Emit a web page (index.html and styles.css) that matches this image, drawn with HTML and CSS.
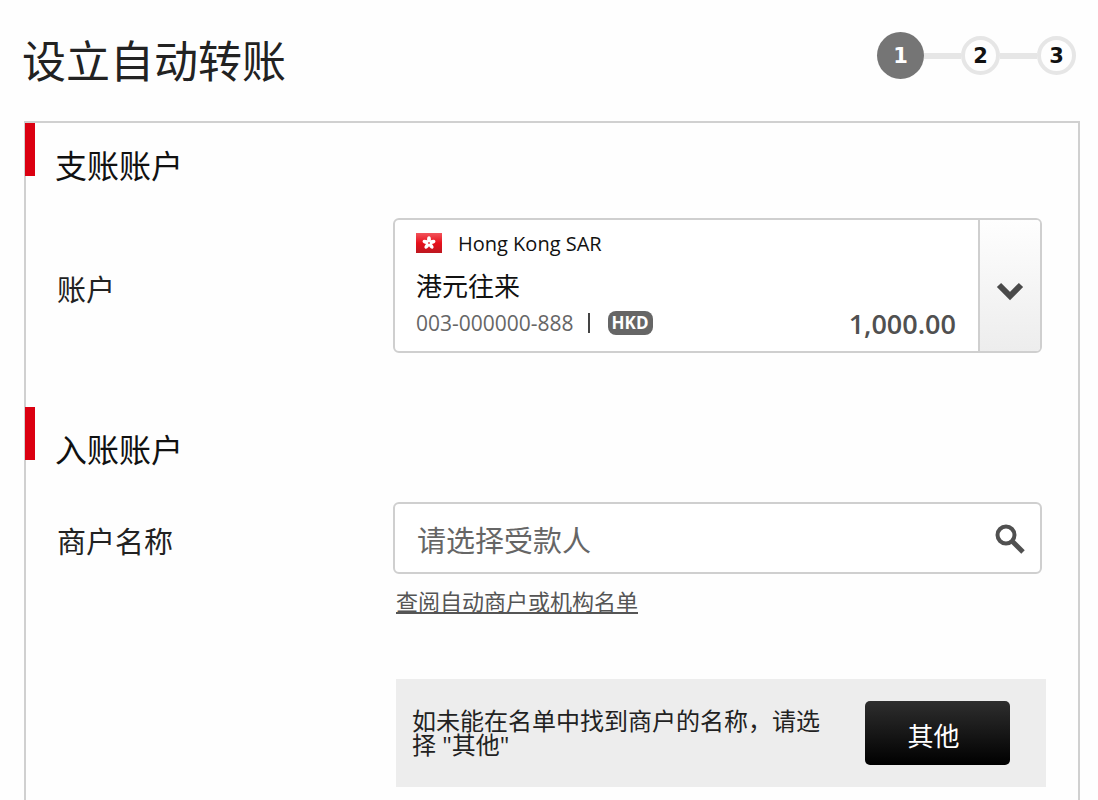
FILE: index.html
```html
<!DOCTYPE html>
<html lang="zh-CN">
  <head>
    <meta charset="UTF-8" />
    <meta name="viewport" content="width=device-width, initial-scale=1.0" />
    <title>设立自动转账</title>
    <link rel="stylesheet" href="styles.css">
  </head>
  <body>
    <header class="header">
      <h1 class="title">设立自动转账</h1>
      <ol class="steps">
        <li class="step active"><span class="circle">1</span></li>
        <li class="step"><span class="circle">2</span></li>
        <li class="step"><span class="circle">3</span></li>
      </ol>
    </header>
    <main class="panel">
      <section class="section">
        <h2 class="section-title"><span>支账账户</span></h2>
        <div class="row account-row">
          <label class="label" for="account">账户</label>
          <button class="account" id="account" type="button" aria-haspopup="listbox">
            <span class="account-info">
              <span class="country">
                <svg class="flag" width="26" height="20" viewBox="0 0 26 20">
                  <defs>
                    <linearGradient id="red" x1="0" y1="0" x2="0" y2="1">
                      <stop offset="0" stop-color="#f2545b" />
                      <stop offset="0.5" stop-color="#e8101c" />
                      <stop offset="1" stop-color="#bd1820" />
                    </linearGradient>
                  </defs>
                  <rect width="26" height="20" fill="url(#red)" />
                  <g fill="#fff">
                    <ellipse cx="13" cy="6.5" rx="1.9" ry="3.2" />
                    <ellipse cx="13" cy="6.5" rx="1.9" ry="3.2" transform="rotate(72 13 10)" />
                    <ellipse cx="13" cy="6.5" rx="1.9" ry="3.2" transform="rotate(144 13 10)" />
                    <ellipse cx="13" cy="6.5" rx="1.9" ry="3.2" transform="rotate(216 13 10)" />
                    <ellipse cx="13" cy="6.5" rx="1.9" ry="3.2" transform="rotate(288 13 10)" />
                  </g>
                  <circle cx="13" cy="10" r="1" fill="#e8505a" />
                </svg>
                <span>Hong Kong SAR</span>
              </span>
              <span class="account-name">港元往来</span>
              <span class="account-detail">
                <span class="number">003-000000-888</span>
                <span class="divider"></span>
                <span class="currency">HKD</span>
                <span class="amount">1,000.00</span>
              </span>
            </span>
            <span class="arrow">
              <svg width="28" height="20" viewBox="0 0 28 20">
                <path d="M3 3 L14 14 L25 3" fill="none" stroke="#4a4a4a" stroke-width="6" />
              </svg>
            </span>
          </button>
        </div>
      </section>
      <section class="section">
        <h2 class="section-title"><span>入账账户</span></h2>
        <div class="row">
          <label class="label" for="payee">商户名称</label>
          <div class="search">
            <input class="search-input" id="payee" type="text" placeholder="请选择受款人">
            <button class="search-button" type="button" aria-label="搜索">
              <svg width="30" height="30" viewBox="0 0 30 30">
                <circle cx="11" cy="11" r="8.5" fill="none" stroke="#505050" stroke-width="4" />
                <path d="M17 17 L28 28" stroke="#505050" stroke-width="5" />
              </svg>
            </button>
          </div>
          <div class="extra">
            <a class="list-link" href="#">查阅自动商户或机构名单</a>
            <div class="notice">
              <p class="notice-text">如未能在名单中找到商户的名称，请选择 "其他"</p>
              <button class="other" type="button">其他</button>
            </div>
          </div>
        </div>
      </section>
    </main>
  </body>
</html>
```

FILE: styles.css
```css
* {
  margin: 0;
  padding: 0;
  box-sizing: border-box;
}

body {
  min-height: 100vh;
  display: flex;
  flex-direction: column;
  padding: 32px 18px 0 24px;
  background-color: #fefefe;
  color: #222;
  font-family: "Open Sans", "Noto Sans CJK SC", sans-serif;
}

button,
input {
  font-family: inherit;
  color: inherit;
}

.header {
  height: 89px;
  display: flex;
  justify-content: space-between;
  align-items: flex-start;
}

.title {
  margin-left: -2px;
  font-size: 44px;
  font-weight: 400;
  line-height: 58px;
}

.steps {
  display: flex;
  align-items: center;
  list-style: none;
  padding-right: 4px;
}

.step {
  display: flex;
  align-items: center;
}

.step:not(:first-child)::before {
  content: "";
  width: 37px;
  height: 6px;
  background-color: #e6e6e6;
}

.circle {
  display: flex;
  align-items: center;
  justify-content: center;
  width: 39px;
  height: 39px;
  border: 4px solid #e6e6e6;
  border-radius: 50%;
  font-family: "DejaVu Sans", sans-serif;
  font-size: 21px;
  font-weight: 700;
  color: #111;
}

.active .circle {
  width: 47px;
  height: 47px;
  border: none;
  background-color: #757575;
  color: white;
}

.panel {
  flex: 1;
  border: 2px solid #d0d0d0;
  border-bottom: none;
}

.section {
  padding-bottom: 54px;
}

.section:last-child {
  padding-bottom: 0;
}

.section-title {
  display: flex;
  height: 95px;
  margin-left: -1px;
  font-size: 32px;
  font-weight: 400;
  line-height: 40px;
  color: #111;
}

.section-title::before {
  content: "";
  width: 10px;
  height: 53px;
  margin-right: 20px;
  background-color: #db0011;
}

.section-title span {
  padding-top: 23px;
}

.row {
  display: grid;
  grid-template-columns: 336px 1fr;
  align-items: center;
  padding: 0 36px 0 31px;
}

.label {
  font-size: 29px;
  line-height: 40px;
  padding-top: 8px;
}

.account {
  display: flex;
  height: 135px;
  border: 2px solid #cfcfcf;
  border-radius: 6px;
  background-color: white;
  text-align: left;
  overflow: hidden;
  cursor: pointer;
}

.account-info {
  flex: 1;
  display: flex;
  flex-direction: column;
  padding: 7px 22px 0 21px;
}

.country {
  display: flex;
  align-items: center;
  gap: 16px;
  height: 32px;
  font-size: 20px;
  color: #111;
}

.account-name {
  margin-top: 8px;
  font-size: 26px;
  line-height: 38px;
  color: #111;
}

.account-detail {
  display: flex;
  align-items: center;
  height: 36px;
}

.number {
  font-size: 21px;
  color: #666;
}

.divider {
  width: 2px;
  height: 20px;
  margin: 0 18px 0 14px;
  background-color: #444;
}

.currency {
  height: 24px;
  padding: 0 4px;
  border-radius: 8px;
  background-color: #666;
  color: white;
  font-size: 17px;
  font-weight: 700;
  line-height: 24px;
}

.amount {
  margin-left: auto;
  font-size: 27px;
  font-weight: 600;
  color: #505050;
}

.arrow {
  display: flex;
  justify-content: center;
  align-items: center;
  align-self: stretch;
  width: 62px;
  padding-top: 12px;
  border-left: 2px solid #cfcfcf;
  background: linear-gradient(#fefefe, #ededed);
}

.search {
  display: flex;
  align-items: center;
  height: 72px;
  border: 2px solid #cfcfcf;
  border-radius: 6px;
  background-color: white;
}

.search-input {
  flex: 1;
  min-width: 0;
  height: 60px;
  padding: 4px 0 0 22px;
  border: none;
  outline: none;
  background: none;
  font-size: 29px;
}

.search-input::placeholder {
  color: #666;
}

.search-button {
  display: flex;
  padding: 2px 15px 0;
  border: none;
  background: none;
  cursor: pointer;
}

.extra {
  grid-column: 2;
  padding-top: 11px;
}

.list-link {
  display: block;
  width: fit-content;
  margin-left: 3px;
  font-size: 22px;
  line-height: 32px;
  color: #555;
}

.notice {
  display: flex;
  justify-content: space-between;
  align-items: center;
  height: 108px;
  margin: 62px -4px 0 3px;
  padding: 0 36px 0 16px;
  background-color: #ededed;
}

.notice-text {
  width: 410px;
  font-size: 24px;
  line-height: 24px;
}

.other {
  width: 145px;
  height: 64px;
  padding: 4px 8px 0 0;
  border: none;
  border-radius: 5px;
  background: linear-gradient(#2e2e2e, #000);
  color: white;
  font-size: 26px;
  cursor: pointer;
}
```
